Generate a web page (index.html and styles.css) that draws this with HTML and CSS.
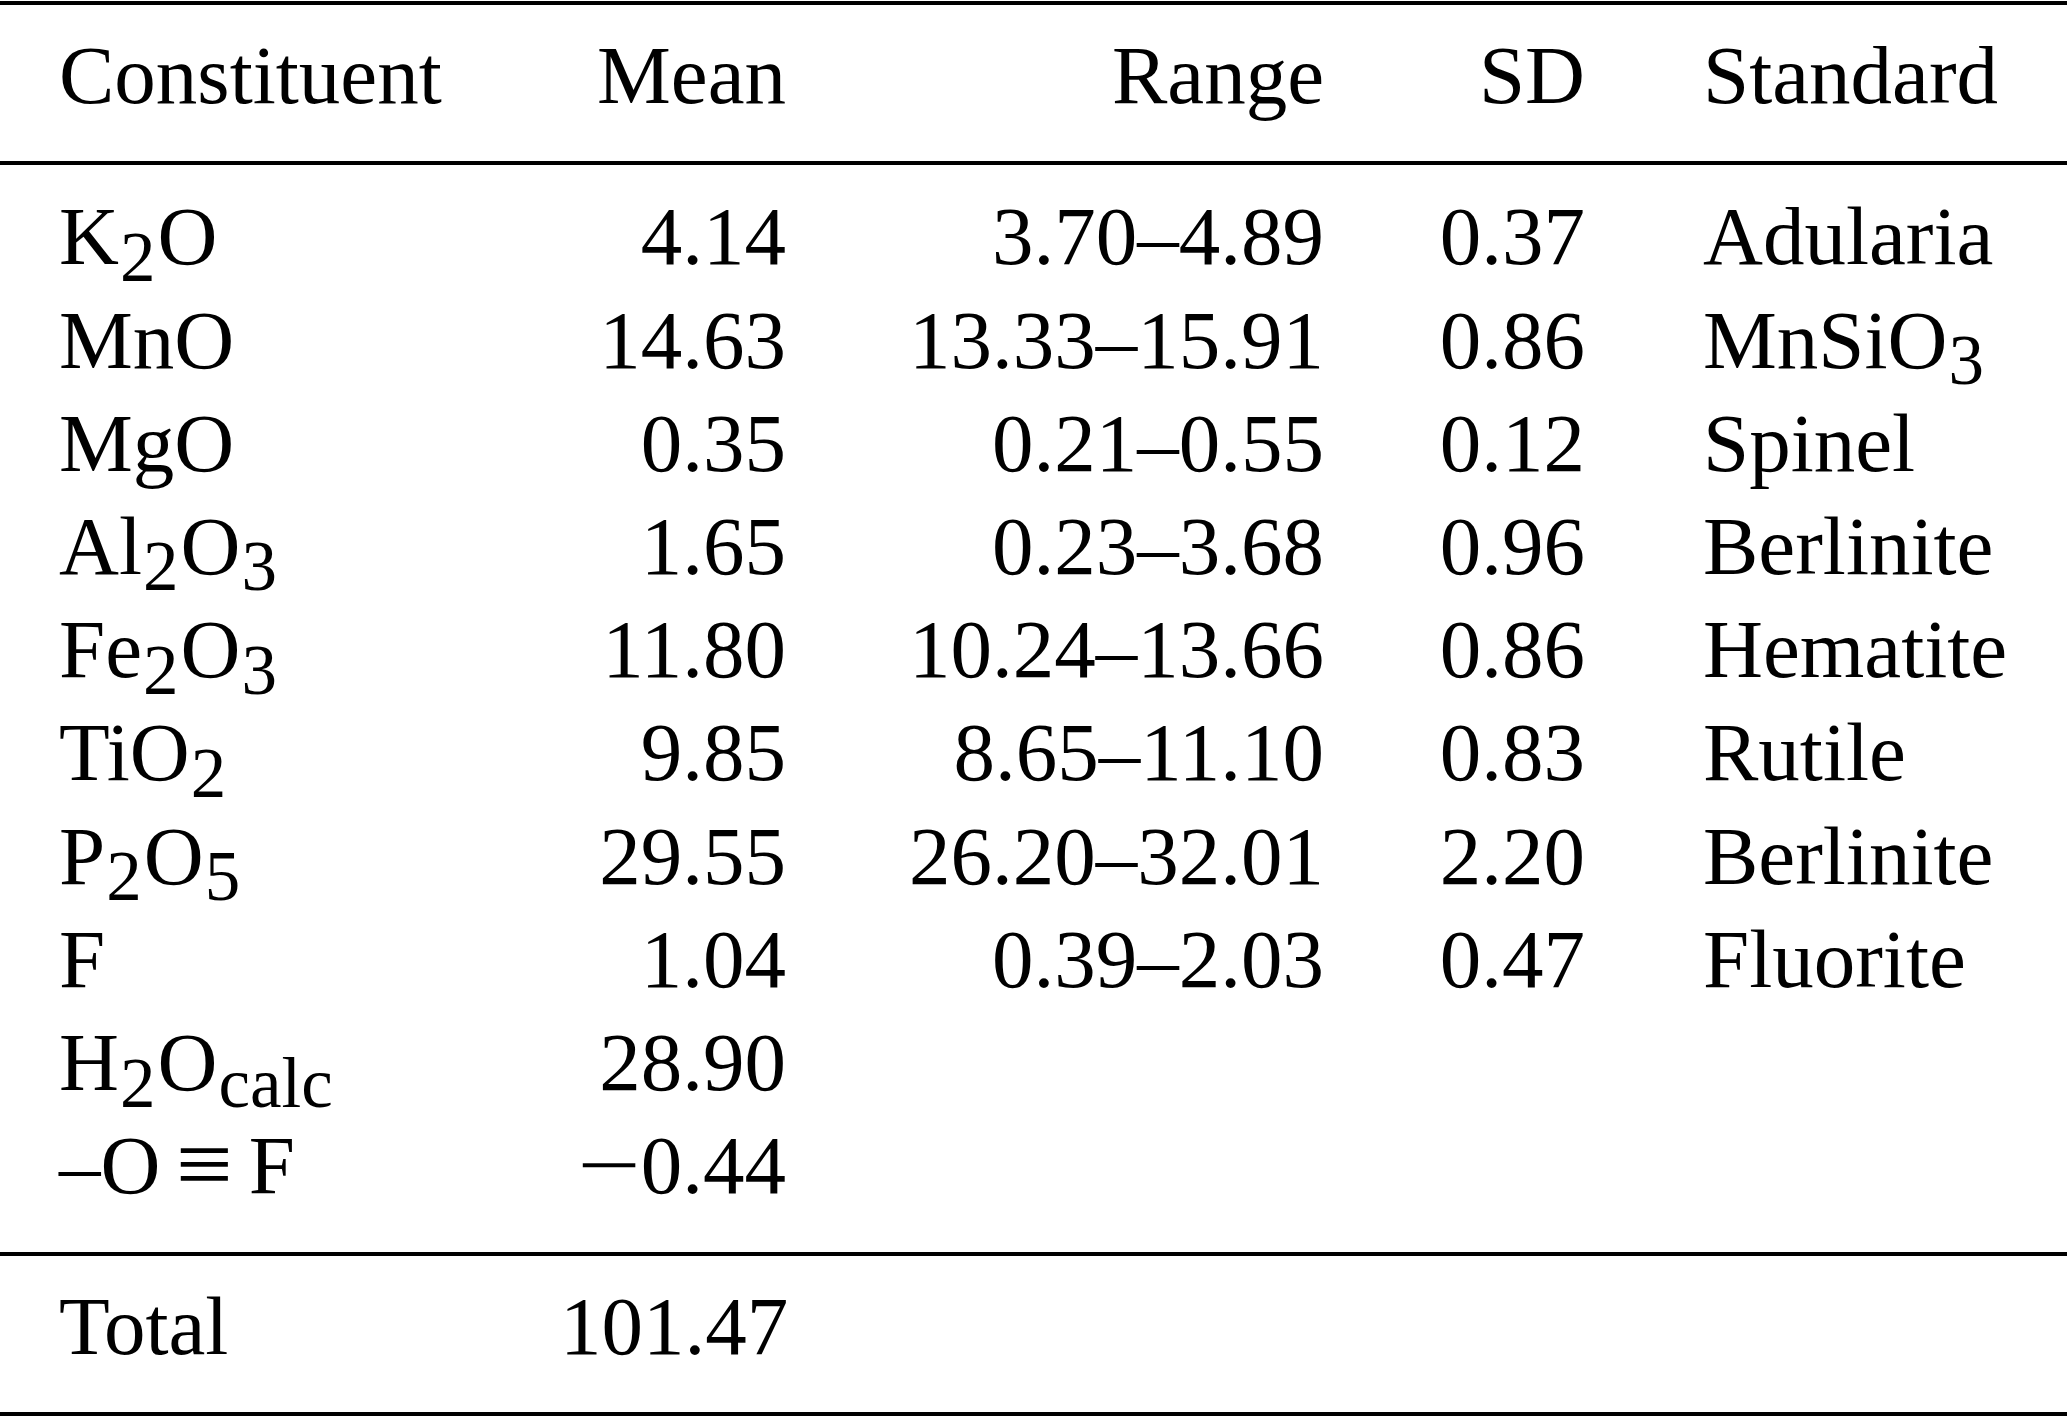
FILE: index.html
```html
<!DOCTYPE html>
<html lang="en">
<head>
<meta charset="utf-8">
<title>Constituents</title>
<link rel="stylesheet" href="styles.css">
</head>
<body>
<table class="tbl">
  <colgroup>
    <col class="c1"><col class="c2"><col class="c3"><col class="c4"><col class="c5">
  </colgroup>
  <thead>
    <tr>
      <th class="l">Constituent</th>
      <th class="r">Mean</th>
      <th class="r">Range</th>
      <th class="r">SD</th>
      <th class="s">Standard</th>
    </tr>
  </thead>
  <tbody class="body">
    <tr class="first">
      <td class="l">K<span class="sub">2</span>O</td>
      <td class="r">4.14</td>
      <td class="r">3.70–4.89</td>
      <td class="r">0.37</td>
      <td class="s">Adularia</td>
    </tr>
    <tr>
      <td class="l">MnO</td>
      <td class="r">14.63</td>
      <td class="r">13.33–15.91</td>
      <td class="r">0.86</td>
      <td class="s">MnSiO<span class="sub">3</span></td>
    </tr>
    <tr>
      <td class="l">MgO</td>
      <td class="r">0.35</td>
      <td class="r">0.21–0.55</td>
      <td class="r">0.12</td>
      <td class="s">Spinel</td>
    </tr>
    <tr>
      <td class="l">Al<span class="sub">2</span>O<span class="sub">3</span></td>
      <td class="r">1.65</td>
      <td class="r">0.23–3.68</td>
      <td class="r">0.96</td>
      <td class="s">Berlinite</td>
    </tr>
    <tr>
      <td class="l">Fe<span class="sub">2</span>O<span class="sub">3</span></td>
      <td class="r">11.80</td>
      <td class="r">10.24–13.66</td>
      <td class="r">0.86</td>
      <td class="s">Hematite</td>
    </tr>
    <tr>
      <td class="l">TiO<span class="sub">2</span></td>
      <td class="r">9.85</td>
      <td class="r">8.65–11.10</td>
      <td class="r">0.83</td>
      <td class="s">Rutile</td>
    </tr>
    <tr>
      <td class="l">P<span class="sub">2</span>O<span class="sub">5</span></td>
      <td class="r">29.55</td>
      <td class="r">26.20–32.01</td>
      <td class="r">2.20</td>
      <td class="s">Berlinite</td>
    </tr>
    <tr>
      <td class="l">F</td>
      <td class="r">1.04</td>
      <td class="r">0.39–2.03</td>
      <td class="r">0.47</td>
      <td class="s">Fluorite</td>
    </tr>
    <tr>
      <td class="l">H<span class="sub">2</span>O<span class="sub">calc</span></td>
      <td class="r">28.90</td>
      <td class="r"></td>
      <td class="r"></td>
      <td class="s"></td>
    </tr>
    <tr class="last">
      <td class="l">–O <span class="equiv">≡</span> F</td>
      <td class="r"><span class="minus">−</span>0.44</td>
      <td class="r"></td>
      <td class="r"></td>
      <td class="s"></td>
    </tr>
  </tbody>
  <tbody class="total">
    <tr>
      <td class="l">Total</td>
      <td class="r">101.47</td>
      <td class="r"></td>
      <td class="r"></td>
      <td class="s"></td>
    </tr>
  </tbody>
</table>
</body>
</html>
```
FILE: styles.css
```css
html, body {
  margin: 0;
  padding: 0;
  background: #ffffff;
}

body {
  padding-top: 1px;
  color: #000000;
  font-family: "Liberation Serif", "Times New Roman", serif;
  font-size: 83px;
}

.tbl {
  width: 2067px;
  table-layout: fixed;
  border-collapse: separate;
  border-spacing: 0;
}

.c1 { width: 560px; }
.c2 { width: 226px; }
.c3 { width: 538px; }
.c4 { width: 261px; }
.c5 { width: 482px; }

.tbl th,
.tbl td {
  padding: 0;
  font-weight: normal;
  line-height: 103.2px;
  white-space: nowrap;
  vertical-align: top;
}

.l { text-align: left; padding-left: 59px !important; }
.r { text-align: right; }
.s { text-align: left; padding-left: 118px !important; }

thead th {
  border-top: 4px solid #000;
  border-bottom: 4px solid #000;
  padding-top: 19.4px !important;
  padding-bottom: 33.4px !important;
}

.body .first td { padding-top: 20.4px; }
.body .last td { padding-bottom: 34.6px; }

.total td {
  border-top: 4px solid #000;
  border-bottom: 4px solid #000;
  padding-top: 19.4px;
  padding-bottom: 33.4px;
}

.sub {
  font-size: 71px;
  line-height: 0;
  vertical-align: -16.5px;
  margin-left: 1px;
  margin-right: 2px;
}

.equiv {
  display: inline-block;
  line-height: 83px;
  transform: scale(1.22, 1.15);
  transform-origin: 50% 48px;
}

.minus {
  display: inline-block;
  line-height: 0;
  transform: scaleX(1.36);
  transform-origin: right center;
}
```
